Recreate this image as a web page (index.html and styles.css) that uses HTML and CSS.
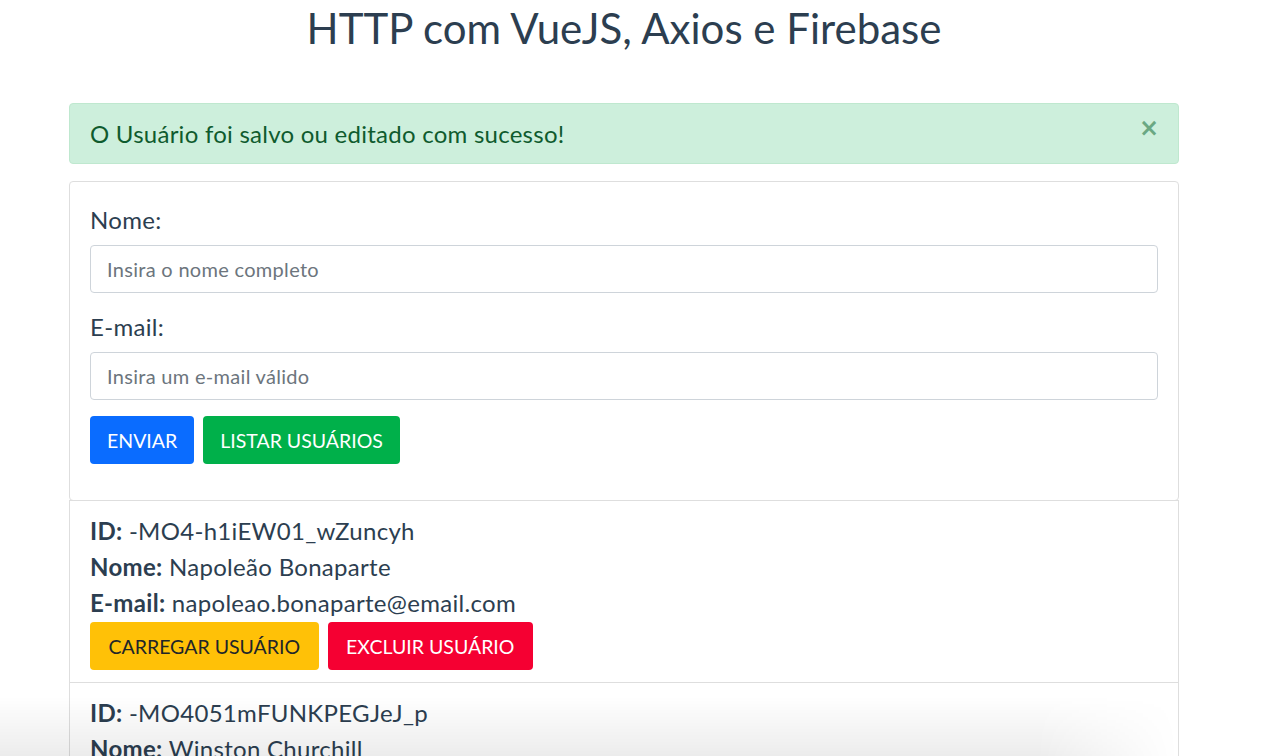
FILE: index.html
```html
<!DOCTYPE html>
<html lang="pt-BR">
<head>
<meta charset="utf-8">
<title>HTTP com VueJS, Axios e Firebase</title>
<link rel="stylesheet" href="styles.css">
</head>
<body>
<div class="page">
  <div class="container">
    <h1 class="title">HTTP com VueJS, Axios e Firebase</h1>
    <div class="alert">
      <span>O Usuário foi salvo ou editado com sucesso!</span>
      <button class="close" type="button">×</button>
    </div>
    <div class="card">
      <div class="form-group">
        <label class="label">Nome:</label>
        <input class="input" type="text" placeholder="Insira o nome completo">
      </div>
      <div class="form-group">
        <label class="label">E-mail:</label>
        <input class="input" type="text" placeholder="Insira um e-mail válido">
      </div>
      <div class="actions">
        <button class="btn btn-blue" type="button">ENVIAR</button>
        <button class="btn btn-green" type="button">LISTAR USUÁRIOS</button>
      </div>
    </div>
    <ul class="list">
      <li class="item">
        <div class="line"><strong>ID:</strong> -MO4-h1iEW01_wZuncyh</div>
        <div class="line"><strong>Nome:</strong> Napoleão Bonaparte</div>
        <div class="line"><strong>E-mail:</strong> napoleao.bonaparte@email.com</div>
        <div class="item-actions">
          <button class="btn btn-yellow" type="button">CARREGAR USUÁRIO</button>
          <button class="btn btn-red" type="button">EXCLUIR USUÁRIO</button>
        </div>
      </li>
      <li class="item">
        <div class="line"><strong>ID:</strong> -MO4051mFUNKPEGJeJ_p</div>
        <div class="line"><strong>Nome:</strong> Winston Churchill</div>
        <div class="line"><strong>E-mail:</strong> winston.churchill@email.com</div>
      </li>
    </ul>
  </div>
  <div class="shade"></div>
</div>
</body>
</html>
```
FILE: styles.css
```css
html, body {
  margin: 0;
  padding: 0;
  background: #fff;
  overflow: hidden;
}
body {
  font-family: Lato, "Open Sans", sans-serif;
  color: #2c3e50;
  font-size: 24px;
}
.page {
  width: 1248px;
  height: 756px;
  position: relative;
  overflow: hidden;
}
.container {
  width: 1110px;
  margin: 0 auto;
}
.title {
  margin: 0;
  padding-top: 3px;
  height: 100px;
  text-align: center;
  font-weight: 400;
  font-size: 42px;
  line-height: 50px;
}
.alert {
  height: 61px;
  box-sizing: border-box;
  border: 1px solid #bfe8cf;
  background: #cdefdc;
  color: #0f5b2e;
  border-radius: 4px;
  padding: 0 20px;
  display: flex;
  align-items: center;
  justify-content: space-between;
  margin-bottom: 17px;
  font-size: 24px;
  letter-spacing: 0.25px;
}
.close {
  border: 0;
  background: none;
  color: #6aa883;
  font-family: "DejaVu Sans", sans-serif;
  font-size: 24px;
  font-weight: 700;
  padding: 0;
  margin-top: -12px;
  margin-right: -1px;
  line-height: 1;
}
.card {
  border: 1px solid #dedede;
  border-radius: 4px;
  padding: 20px 20px 36px;
}
.form-group {
  margin-bottom: 16px;
}
.label {
  display: block;
  line-height: 36px;
  margin-bottom: 7px;
  font-size: 24px;
  letter-spacing: 0.3px;
}
.input {
  display: block;
  width: 100%;
  box-sizing: border-box;
  height: 48px;
  border: 1px solid #ced4da;
  border-radius: 4px;
  padding: 0 16px;
  font-family: inherit;
  font-size: 20px;
  letter-spacing: 0.3px;
  color: #495057;
}
.input::placeholder {
  color: #6c757d;
}
.actions, .item-actions {
  display: flex;
  gap: 9px;
}
.btn {
  height: 48px;
  border: 0;
  border-radius: 4px;
  padding: 0 17px;
  font-family: inherit;
  font-size: 19.5px;
  color: #fff;
}
.item-actions .btn {
  padding: 0 18.5px;
}
.btn-blue { background: #0a6cff; }
.btn-green { background: #00b04a; }
.btn-yellow { background: #ffc107; color: #212529; }
.btn-red { background: #f50032; }
.list {
  list-style: none;
  margin: 0;
  padding: 0;
}
.item {
  border: 1px solid #dedede;
  padding: 12px 20px 12px;
  margin-top: -1px;
}
.line {
  line-height: 36px;
  font-size: 24px;
  letter-spacing: 0.3px;
}
.line strong {
  font-weight: 700;
}
.item-actions {
  margin-top: 1px;
}
.shade {
  position: absolute;
  left: 0;
  right: 70px;
  bottom: 0;
  height: 60px;
  background: linear-gradient(to bottom, rgba(0,0,0,0), rgba(0,0,0,0.075));
  -webkit-mask-image: linear-gradient(to right, #000 88%, transparent 100%);
  mask-image: linear-gradient(to right, #000 88%, transparent 100%);
}
```
